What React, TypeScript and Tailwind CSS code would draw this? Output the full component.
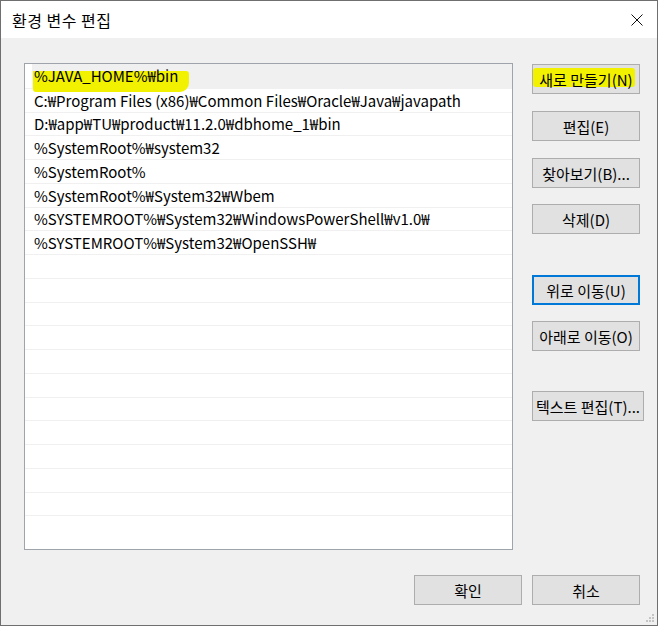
import type { ReactNode } from "react";

const font = { fontFamily: '"Noto Sans CJK KR", "Noto Sans", sans-serif' };

const paths = [
  "%JAVA_HOME%₩bin",
  "C:₩Program Files (x86)₩Common Files₩Oracle₩Java₩javapath",
  "D:₩app₩TU₩product₩11.2.0₩dbhome_1₩bin",
  "%SystemRoot%₩system32",
  "%SystemRoot%",
  "%SystemRoot%₩System32₩Wbem",
  "%SYSTEMROOT%₩System32₩WindowsPowerShell₩v1.0₩",
  "%SYSTEMROOT%₩System32₩OpenSSH₩",
];

const TOTAL_ROWS = 20;

function Button({
  children,
  className = "",
  focused = false,
}: {
  children: ReactNode;
  className?: string;
  focused?: boolean;
}) {
  return (
    <button
      className={`h-[30px] w-[108px] shrink-0 bg-[#e1e1e1] text-[15px] leading-none text-black whitespace-nowrap flex items-center justify-center ${
        focused ? "border-2 border-[#0078d7]" : "border border-[#adadad]"
      } ${className}`}
    >
      {children}
    </button>
  );
}

export default function App() {
  const rows = Array.from({ length: TOTAL_ROWS }, (_, i) => paths[i] ?? "");

  return (
    <div
      className="w-[658px] h-[626px] border border-[#6f6f6f] flex flex-col bg-[#f0f0f0] text-black"
      style={font}
    >
      {/* Title bar */}
      <div className="h-[37px] bg-white flex items-center justify-between pl-[11px] pr-[14px]">
        <span className="text-[16px] leading-none tracking-[0.5px]">환경 변수 편집</span>
        <svg width="12" height="12" viewBox="0 0 12 12">
          <path d="M0.5 0.5L11.5 11.5M11.5 0.5L0.5 11.5" stroke="#111" strokeWidth="1" />
        </svg>
      </div>

      {/* Body */}
      <div className="flex-1 relative pl-[23px] pr-[13px] pt-[25px] flex flex-col">
        <div className="flex">
          {/* Path list */}
          <div className="relative w-[489px] h-[487px] shrink-0 border border-[#9fa4ab] bg-white overflow-hidden">
            {rows.map((p, i) => (
              <div
                key={i}
                className={`h-[23.75px] flex items-center text-[15px] leading-none whitespace-nowrap ${
                  i === 0 ? "" : "border-t border-[#f0f0f0] pl-[9px]"
                }`}
              >
                {i === 0 ? (
                  <div className="ml-[7px] h-full flex-1 bg-[#f0f0f0] flex items-center pl-[2px] relative">
                    <span className="absolute left-[1px] top-[7px] w-[156px] h-[21px] bg-[#f2f200] rounded-br-[9px] rounded-tr-[3px] rounded-bl-[3px]" />
                    <span className="relative">{p}</span>
                  </div>
                ) : (
                  p
                )}
              </div>
            ))}
          </div>

          {/* Action buttons */}
          <div className="ml-[19px] flex flex-col">
            <Button className="mt-[1px] relative">
              <span className="absolute left-[0px] top-[3px] w-[102px] h-[19px] bg-[#f2f200] rounded-[3px]" />
              <span className="relative">새로 만들기(N)</span>
            </Button>
            <Button className="mt-[17px]">편집(E)</Button>
            <Button className="mt-[17px]">찾아보기(B)...</Button>
            <Button className="mt-[16px]">삭제(D)</Button>
            <Button className="mt-[41px]" focused>
              위로 이동(U)
            </Button>
            <Button className="mt-[16px]">아래로 이동(O)</Button>
            <Button className="mt-[40px] w-[112px]">텍스트 편집(T)...</Button>
          </div>
        </div>

        {/* OK / Cancel */}
        <div className="mt-[25px] pr-[4px] flex justify-end gap-[10px]">
          <Button>확인</Button>
          <Button>취소</Button>
        </div>

        {/* Size grip */}
        <svg className="absolute right-[2px] bottom-[2px]" width="10" height="10" viewBox="0 0 10 10">
          {[
            [7, 1],
            [4, 4],
            [7, 4],
            [1, 7],
            [4, 7],
            [7, 7],
          ].map(([x, y], i) => (
            <rect key={i} x={x} y={y} width="2" height="2" fill="#c4c4c4" />
          ))}
        </svg>
      </div>
    </div>
  );
}
